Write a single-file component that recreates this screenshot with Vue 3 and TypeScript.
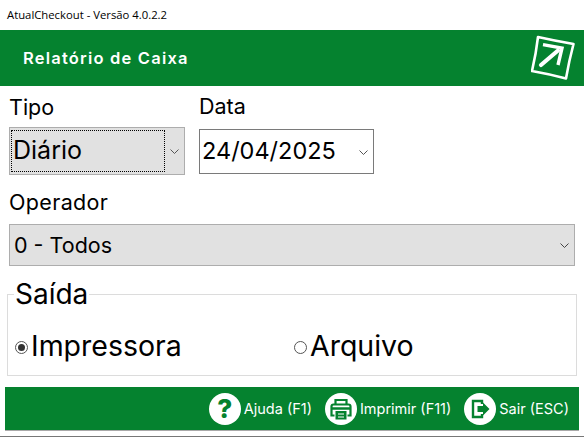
<template>
  <div class="window">
    <div class="titlebar">AtualCheckout - Versão 4.0.2.2</div>

    <header class="header">
      <h1 class="header-title">Relatório de Caixa</h1>
      <svg class="logo" width="46" height="46" viewBox="0 0 46 46" fill="none">
        <path d="M7 2Q25 6 42.500 9 38 26 35 43.500 18 39 1 36 5 19 7 2Z" stroke="#fff" stroke-width="2.600" stroke-linejoin="round" />
        <path d="M10 30 27 15.500" stroke="#fff" stroke-width="4.200" stroke-linecap="round" />
        <path d="M12 9.700 31 13 27 30" stroke="#fff" stroke-width="3.400" />
      </svg>
    </header>

    <main class="form">
      <div class="top-row">
        <div class="field">
          <label class="label">Tipo</label>
          <div class="select select-tipo">
            <span class="select-focus">Diário</span>
            <svg class="chevron" width="9" height="5" viewBox="0 0 9 5" fill="none"><path d="M.5.500 4.500 4.500 8.500.500" stroke="#555" /></svg>
          </div>
        </div>
        <div class="field field-data">
          <label class="label">Data</label>
          <div class="select select-data">
            <span class="date-value">24/04/2025</span>
            <svg class="chevron" width="9" height="5" viewBox="0 0 9 5" fill="none"><path d="M.5.500 4.500 4.500 8.500.500" stroke="#555" /></svg>
          </div>
        </div>
      </div>

      <div class="field field-operador">
        <label class="label label-operador">Operador</label>
        <div class="select select-operador">
          <span>0 - Todos</span>
          <svg class="chevron" width="9" height="5" viewBox="0 0 9 5" fill="none"><path d="M.5.500 4.500 4.500 8.500.500" stroke="#444" /></svg>
        </div>
      </div>

      <fieldset class="saida">
        <legend class="saida-title">Saída</legend>
        <div class="options">
          <label v-for="opt in options" :key="opt.name" class="option">
            <span class="radio" :class="{ checked: opt.name === selected }"></span>
            {{ opt.name }}
          </label>
        </div>
      </fieldset>
    </main>

    <footer class="footer">
      <button class="action">
        <span class="action-icon help">?</span>
        Ajuda (F1)
      </button>
      <button class="action">
        <span class="action-icon">
          <svg width="26" height="26" viewBox="0 0 26 26" fill="none">
            <path d="M7.500 8.500V4H18.500V8.500" stroke="#05822f" stroke-width="2.200" />
            <path d="M6.500 19.500H3.500V10.500Q3.500 8.500 5.500 8.500H20.500Q22.500 8.500 22.500 10.500V19.500H19.500" stroke="#05822f" stroke-width="2.200" />
            <path d="M4 12.500H22" stroke="#05822f" stroke-width="2.500" />
            <rect x="7.500" y="15" width="11" height="8.500" fill="#05822f" />
            <path d="M10 18H16M10 21H16" stroke="#fff" stroke-width="1.200" />
          </svg>
        </span>
        Imprimir (F11)
      </button>
      <button class="action">
        <span class="action-icon">
          <svg width="24" height="24" viewBox="0 0 24 24" fill="none">
            <path d="M14 7V4H5V20H14V17" stroke="#05822f" stroke-width="2.400" />
            <path d="M9.500 9H15V5.500L21.500 12 15 18.500V15H9.500Z" fill="#05822f" />
          </svg>
        </span>
        Sair (ESC)
      </button>
    </footer>
    <div class="bottom-line"></div>
  </div>
</template>

<script setup lang="ts">
const options = [{ name: 'Impressora' }, { name: 'Arquivo' }];
const selected = 'Impressora';
</script>

<style>
html,
body {
  margin: 0;
  background: #fff;
}
</style>

<style scoped>
.window {
  width: 584px;
  height: 438px;
  overflow: hidden;
  background: #fff;
  color: #000;
  font-family: Inter, "Liberation Sans", sans-serif;
  display: flex;
  flex-direction: column;
}

.titlebar {
  height: 30px;
  padding-left: 7px;
  box-sizing: border-box;
  font: 11.300px/30px "Open Sans", sans-serif;
}

.header {
  height: 56px;
  flex: none;
  background: #05822f;
  display: flex;
  align-items: center;
  justify-content: space-between;
  padding: 0 7px 0 23px;
}

.header-title {
  margin: 0;
  color: #fff;
  font-size: 16.500px;
  font-weight: 600;
  letter-spacing: 1.200px;
}

.form {
  flex: 1;
  padding: 9px 9px 0 9px;
}

.top-row {
  display: flex;
  gap: 14px;
}

.field {
  display: flex;
  flex-direction: column;
}

.field-data {
  margin-top: -1px;
}

.field-operador {
  margin-top: 15px;
}

.label {
  font-size: 21.500px;
  line-height: 24px;
  margin-bottom: 8px;
}

.label-operador {
  letter-spacing: 0.350px;
}

.select {
  box-sizing: border-box;
  display: flex;
  align-items: center;
  position: relative;
}

.select-tipo {
  width: 176px;
  height: 48px;
  background: #e1e1e1;
  border: 1px solid #adadad;
  padding: 2px 1px;
  font-size: 25px;
}

.select-focus {
  width: 154px;
  height: 42px;
  line-height: 38px;
  box-sizing: border-box;
  padding-left: 1px;
  border: 1px dotted #000;
}

.select-data {
  width: 175px;
  height: 45px;
  border: 1px solid #7a7a7a;
  padding: 0 0 3px 2px;
  font-size: 23.500px;
  margin-top: 3px;
}

.select-operador {
  width: 566px;
  height: 42px;
  background: #e1e1e1;
  border: 1px solid #adadad;
  padding-left: 4px;
  font-size: 21.500px;
  margin-top: 2px;
}

.chevron {
  position: absolute;
  right: 5px;
  top: 50%;
  margin-top: -2px;
}

.saida {
  margin: 13px 0 0 -2px;
  width: 570px;
  height: 97px;
  box-sizing: border-box;
  border: 1px solid #dcdcdc;
  padding: 0;
}

.saida-title {
  margin-left: 6px;
  padding: 0 1px;
  font-size: 28px;
  line-height: 30px;
}

.options {
  display: grid;
  grid-template-columns: 279px 1fr;
  padding: 19px 0 0 7px;
}

.option {
  display: flex;
  align-items: center;
  gap: 3px;
  font-size: 28.500px;
  line-height: 36px;
}

.radio {
  width: 13px;
  height: 13px;
  box-sizing: border-box;
  border: 1px solid #555;
  border-radius: 50%;
  display: inline-block;
  position: relative;
  margin-top: 2px;
}

.radio.checked::after {
  content: "";
  position: absolute;
  inset: 2px;
  background: #333;
  border-radius: 50%;
}

.footer {
  flex: none;
  height: 44px;
  box-sizing: border-box;
  margin: 0 5px;
  background: #05822f;
  border-bottom: 1px solid #a9a9a9;
  display: flex;
  align-items: center;
  justify-content: flex-end;
  gap: 13px;
  padding-right: 10px;
}

.action {
  display: flex;
  align-items: center;
  gap: 3px;
  padding: 0;
  border: none;
  background: none;
  color: #fff;
  font: 14.500px Inter, sans-serif;
}

.action-icon {
  width: 32px;
  height: 32px;
  border-radius: 50%;
  background: #fff;
  color: #05822f;
  display: flex;
  align-items: center;
  justify-content: center;
}

.help {
  font-size: 26px;
  font-weight: 800;
}

.bottom-line {
  height: 1px;
  margin-top: 5px;
  margin-bottom: 1px;
  background: #777;
}
</style>
